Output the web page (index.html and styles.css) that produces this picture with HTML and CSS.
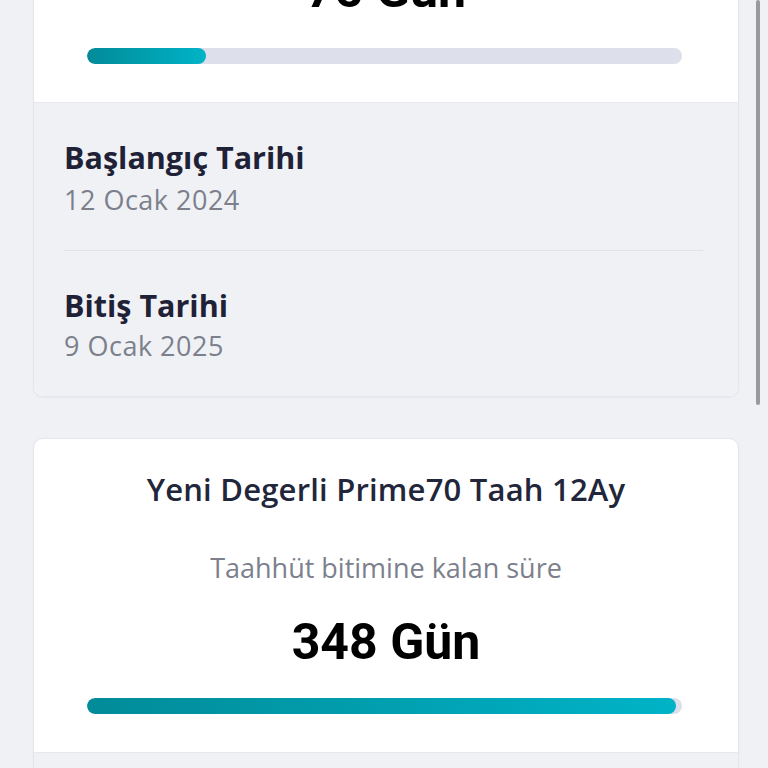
FILE: index.html
```html
<!DOCTYPE html>
<html lang="tr">
<head>
<meta charset="utf-8">
<link rel="stylesheet" href="styles.css">
</head>
<body>
<div class="page">
  <div class="list">
    <section class="card card-first">
      <div class="card-top">
        <div class="days">75 Gün</div>
        <div class="bar"><div class="fill" style="width:20%"></div></div>
      </div>
      <div class="card-bottom">
        <div class="row">
          <div class="row-title">Başlangıç Tarihi</div>
          <div class="row-value">12 Ocak 2024</div>
        </div>
        <div class="row">
          <div class="row-title">Bitiş Tarihi</div>
          <div class="row-value">9 Ocak 2025</div>
        </div>
      </div>
    </section>
    <section class="card">
      <div class="card-top">
        <div class="title">Yeni Degerli Prime70 Taah 12Ay</div>
        <div class="subtitle">Taahhüt bitimine kalan süre</div>
        <div class="days">348 Gün</div>
        <div class="bar"><div class="fill" style="width:99%"></div></div>
      </div>
      <div class="card-bottom card-bottom-open"></div>
    </section>
  </div>
  <div class="scrollbar"></div>
</div>
</body>
</html>
```
FILE: styles.css
```css
* { box-sizing: border-box; }
html, body {
  margin: 0;
  padding: 0;
  background: #f0f1f5;
  overflow: hidden;
  height: 768px;
}
body {
  font-family: "Open Sans", Lato, sans-serif;
}
.page {
  position: relative;
  width: 768px;
  height: 768px;
  overflow: hidden;
}
.list {
  display: flex;
  flex-direction: column;
  gap: 41px;
  padding-left: 33px;
  margin-top: -75px;
}
.card {
  width: 706px;
  background: #ffffff;
  border: 1px solid #e4e6eb;
  border-radius: 10px;
  overflow: hidden;
  box-shadow: 0 1px 2px rgba(20, 30, 60, 0.04);
}
.card-top {
  display: flex;
  flex-direction: column;
  align-items: center;
  padding: 32px 0 38px;
}
.card-first .card-top {
  padding-top: 34px;
}
.title {
  font-size: 31px;
  line-height: 36px;
  font-weight: 600;
  letter-spacing: 0.2px;
  color: #22263a;
}
.subtitle {
  margin-top: 45px;
  font-size: 27px;
  line-height: 32px;
  color: #7b808c;
}
.days {
  margin-top: 28px;
  font-family: Roboto, "Liberation Sans", sans-serif;
  font-weight: 700;
  font-size: 50px;
  line-height: 60px;
  color: #000000;
}
.card-first .days { margin-top: 0; }
.bar {
  align-self: flex-start;
  margin-left: 53px;
  margin-top: 26px;
  width: 595px;
  height: 16px;
  border-radius: 8px;
  background: #dde0ea;
  overflow: hidden;
}
.card-first .bar { margin-top: 28px; }
.fill {
  height: 100%;
  border-radius: 8px;
  background: linear-gradient(90deg, #028b98 0%, #00b3c7 100%);
}
.card-bottom {
  background: #f0f1f5;
  border-top: 1px solid #e6e8ed;
  padding: 0 35px 0 30px;
}
.card-bottom-open { height: 40px; }
.row {
  display: flex;
  flex-direction: column;
  gap: 10px;
  padding: 37px 0 34px;
}
.row + .row {
  gap: 8px;
  border-top: 1px solid #e1e3e9;
  padding-bottom: 34px;
}
.row-title {
  font-size: 30.5px;
  line-height: 34px;
  font-weight: 700;
  color: #1f2237;
}
.row-value {
  font-size: 27px;
  line-height: 32px;
  letter-spacing: 0.5px;
  color: #7b808c;
}
.scrollbar {
  position: absolute;
  top: 0;
  left: 756px;
  width: 4px;
  height: 405px;
  border-radius: 2px;
  background: #9a9a9e;
}
```
